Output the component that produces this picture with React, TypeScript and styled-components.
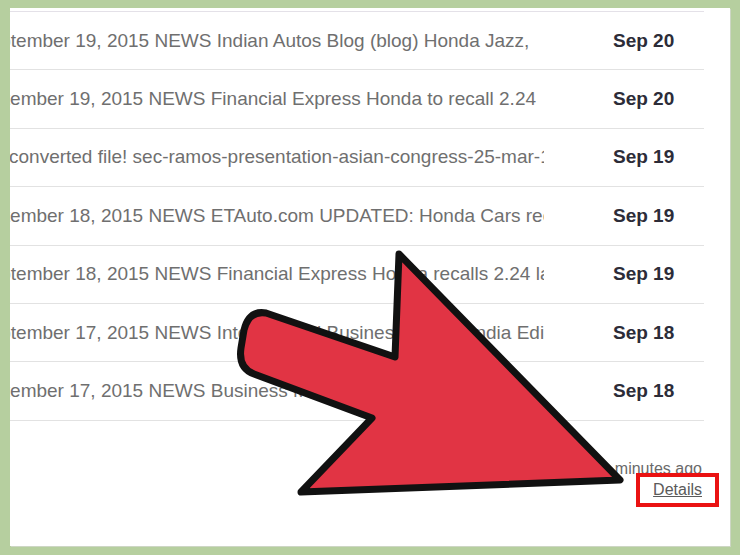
import styled, { createGlobalStyle } from "styled-components";

interface Item {
  text: string;
  shift: number;
  date: string;
}

const items: Item[] = [
  { text: "September 19, 2015 NEWS Indian Autos Blog (blog) Honda Jazz,", shift: -33, date: "Sep 20" },
  { text: "September 19, 2015 NEWS Financial Express Honda to recall 2.24", shift: -39, date: "Sep 20" },
  { text: "converted file! sec-ramos-presentation-asian-congress-25-mar-15.pptx", shift: -1, date: "Sep 19" },
  { text: "September 18, 2015 NEWS ETAuto.com UPDATED: Honda Cars recalls", shift: -39, date: "Sep 19" },
  { text: "September 18, 2015 NEWS Financial Express Honda recalls 2.24 lakh cars", shift: -33, date: "Sep 19" },
  { text: "September 17, 2015 NEWS International Business Times, India Edition", shift: -33, date: "Sep 18" },
  { text: "September 17, 2015 NEWS Business Mirror", shift: -39, date: "Sep 18" },
];

export default function App() {
  return (
    <>
      <GlobalStyle />
      <Frame>
        <Panel>
          <List>
            {items.map((item, i) => (
              <Row key={i}>
                <Snippet>
                  <SnippetText shift={item.shift}>{item.text}</SnippetText>
                </Snippet>
                <DateCell>{item.date}</DateCell>
              </Row>
            ))}
          </List>
          <Footer>
            <Activity>minutes ago</Activity>
            <DetailsLink href="#">Details</DetailsLink>
          </Footer>
        </Panel>
        <Arrow viewBox="0 0 740 555" width="740" height="555">
          <path
            d="M 399 254 L 620 480 L 301 492 L 372 418 L 254 374 Q 238 368 241 348 L 244 330 Q 249 310 266 313 L 395 357 Z"
            fill="#e13444"
            stroke="#111"
            strokeWidth="7"
            strokeLinejoin="round"
          />
        </Arrow>
      </Frame>
    </>
  );
}

const GlobalStyle = createGlobalStyle`
  html, body {
    margin: 0;
    padding: 0;
    background: #b6cf9f;
    font-family: "Liberation Sans", Arial, sans-serif;
  }
`;

const Frame = styled.div`
  position: relative;
  width: 740px;
  height: 555px;
  padding: 8px 10px 9px;
  box-sizing: border-box;
  overflow: hidden;
`;

const Panel = styled.div`
  height: 100%;
  background: #fff;
  padding: 3px 26px 0 0;
  box-sizing: border-box;
  box-shadow: 1px 1px 0 #cdd6c4;
`;

const List = styled.div`
  border-top: 1px solid #e4e1e8;
`;

const Row = styled.div`
  display: flex;
  align-items: center;
  height: 58.4px;
  box-sizing: border-box;
  border-bottom: 1px solid #e2e2e2;
`;

const Snippet = styled.div`
  width: 534px;
  overflow: hidden;
  white-space: nowrap;
`;

const SnippetText = styled.span<{ shift: number }>`
  display: inline-block;
  margin-left: ${({ shift }) => shift}px;
  font-size: 19px;
  color: #6f6f6f;
`;

const DateCell = styled.div`
  padding-left: 69px;
  font-size: 19px;
  font-weight: bold;
  color: #2c2c38;
`;

const Footer = styled.div`
  display: flex;
  flex-direction: column;
  align-items: flex-end;
  margin-top: 37px;
  padding-right: 2px;
  font-size: 16px;
  line-height: 21px;
  color: #6a6a6a;
`;

const Activity = styled.span``;

const DetailsLink = styled.a`
  position: relative;
  color: #5a5a5a;
  text-decoration: underline;

  &::after {
    content: "";
    position: absolute;
    top: -6px;
    bottom: -7px;
    left: -17px;
    right: -17px;
    border: 4px solid #ea1212;
  }
`;

const Arrow = styled.svg`
  position: absolute;
  top: 0;
  left: 0;
  pointer-events: none;
`;
